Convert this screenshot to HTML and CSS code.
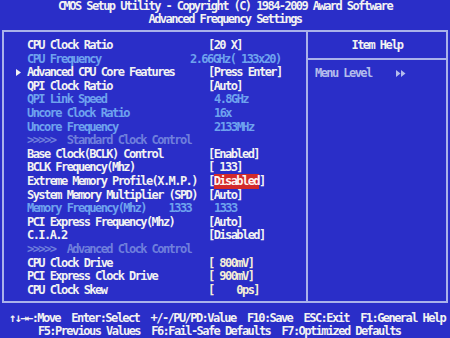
FILE: index.html
```html
<html>
    <head>
        <title>CMOS Setup Utility</title>
        <link rel="stylesheet" href="styles.css">
    </head>
    <body>
        <div class="title">CMOS Setup Utility - Copyright (C) 1984-2009 Award Software<br>Advanced Frequency Settings</div>

        <div class="panel">
            <div class="menu">
                <div class="row"><span class="label">CPU Clock Ratio</span><span class="value">[20 X]</span></div>
                <div class="row dim"><span class="label">CPU Frequency</span><span class="value back">2.66GHz( 133x20)</span></div>
                <div class="row"><svg class="arrow" width="5" height="7" viewBox="0 0 5 7"><path d="M0 0 L5 3.5 L0 7 Z" fill="#f2f2f2"/></svg><span class="label">Advanced CPU Core Features</span><span class="value">[Press Enter]</span></div>
                <div class="row"><span class="label">QPI Clock Ratio</span><span class="value">[Auto]</span></div>
                <div class="row dim"><span class="label">QPI Link Speed</span><span class="value in">4.8GHz</span></div>
                <div class="row dim"><span class="label">Uncore Clock Ratio</span><span class="value in">16x</span></div>
                <div class="row dim"><span class="label">Uncore Frequency</span><span class="value in">2133MHz</span></div>
                <div class="row sep"><span class="label">&gt;&gt;&gt;&gt;&gt;  Standard Clock Control</span></div>
                <div class="row"><span class="label">Base Clock(BCLK) Control</span><span class="value">[Enabled]</span></div>
                <div class="row"><span class="label">BCLK Frequency(Mhz)</span><span class="value">[ 133]</span></div>
                <div class="row"><span class="label">Extreme Memory Profile(X.M.P.)</span><span class="value">[<span class="pick">Disabled</span>]</span></div>
                <div class="row"><span class="label">System Memory Multiplier (SPD)</span><span class="value">[Auto]</span></div>
                <div class="row dim"><span class="label">Memory Frequency(Mhz)    1333</span><span class="value in">1333</span></div>
                <div class="row"><span class="label">PCI Express Frequency(Mhz)</span><span class="value">[Auto]</span></div>
                <div class="row"><span class="label">C.I.A.2</span><span class="value">[Disabled]</span></div>
                <div class="row sep"><span class="label">&gt;&gt;&gt;&gt;&gt;  Advanced Clock Control</span></div>
                <div class="row"><span class="label">CPU Clock Drive</span><span class="value warm">[ 800mV]</span></div>
                <div class="row"><span class="label">PCI Express Clock Drive</span><span class="value warm">[ 900mV]</span></div>
                <div class="row"><span class="label">CPU Clock Skew</span><span class="value warm">[    0ps]</span></div>
            </div>
            <div class="help">
                <div class="help_head">Item Help</div>
                <div class="help_text"><span>Menu Level</span><svg class="tri" width="10" height="7" viewBox="0 0 10 7"><path d="M0 0 L4.5 3.5 L0 7 Z M5 0 L9.5 3.5 L5 7 Z" fill="#b4bcec"/></svg></div>
            </div>
        </div>

        <div class="keys">
            <div class="keys_one">&#8593;&#8595;&#8594;&#8592;:Move  Enter:Select  +/-/PU/PD:Value  F10:Save  ESC:Exit  F1:General Help</div>
            <div class="keys_two">F5:Previous Values  F6:Fail-Safe Defaults  F7:Optimized Defaults</div>
        </div>
    </body>
</html>
```

FILE: styles.css
```css
body{
    margin: 0;
    background: #2a2ec8;
    color: #f2f2f2;
    font-family: "DejaVu Sans Mono", "Liberation Mono", monospace;
    font-weight: bold;
    font-size: 12px;
    letter-spacing: -1.56px;
    overflow: hidden;
}
.title{
    text-align: center;
    line-height: 13px;
}
.panel{
    display: grid;
    grid-template-columns: 302px 1fr;
    height: 273px;
    margin: 4px 2px 0 2px;
    border: 2px solid #aab2ea;
    box-sizing: border-box;
}
.menu{
    padding-top: 7px;
    padding-left: 23px;
}
.row{
    display: flex;
    position: relative;
    height: 13.6px;
    line-height: 13.6px;
}
.label, .value, .keys_one, .keys_two{
    white-space: pre;
}
.label{
    width: 181px;
    flex: none;
}
.value.back{
    margin-left: -18px;
}
.value.in{
    margin-left: 6px;
}
.dim{
    color: #6ea2ee;
}
.sep{
    color: #6f7fdc;
}
.warm{
    color: #f4eed6;
}
.arrow{
    position: absolute;
    left: -11px;
    top: 3px;
}
.pick{
    background: #d22a2a;
    color: #fff4f0;
    padding: 0 0 1px 0;
}
.help{
    border-left: 2px solid #aab2ea;
}
.help_head{
    height: 26px;
    line-height: 27px;
    text-align: center;
    border-bottom: 2px solid #aab2ea;
}
.help_text{
    display: flex;
    align-items: center;
    gap: 24px;
    padding: 7px 0 0 7px;
    line-height: 13.6px;
    color: #b4bcec;
}
.keys{
    padding-top: 9px;
    line-height: 13px;
}
.keys_one{
    padding-left: 9px;
}
.keys_two{
    padding-left: 38px;
}
```
